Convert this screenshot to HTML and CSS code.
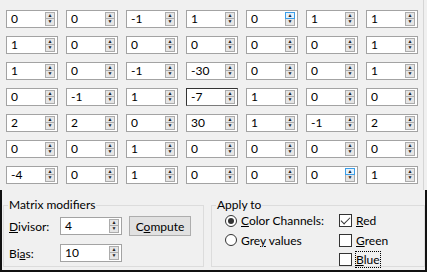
FILE: index.html
```html
<!DOCTYPE html>
<html lang="en">
<head>
    <meta charset="UTF-8">
    <title>User Defined Filter</title>
    <link rel="stylesheet" href="styles.css">
</head>
<body>
    <div class="dialog">
        <!-- 7x7 convolution matrix -->
        <div class="matrix">
            <div class="spin"><span class="val">0</span><span class="arrows"></span></div>
            <div class="spin"><span class="val">0</span><span class="arrows"></span></div>
            <div class="spin"><span class="val">-1</span><span class="arrows"></span></div>
            <div class="spin"><span class="val">1</span><span class="arrows"></span></div>
            <div class="spin"><span class="val">0</span><span class="arrows hot"></span></div>
            <div class="spin"><span class="val">1</span><span class="arrows"></span></div>
            <div class="spin"><span class="val">1</span><span class="arrows"></span></div>

            <div class="spin"><span class="val">1</span><span class="arrows"></span></div>
            <div class="spin"><span class="val">0</span><span class="arrows"></span></div>
            <div class="spin"><span class="val">0</span><span class="arrows"></span></div>
            <div class="spin"><span class="val">0</span><span class="arrows"></span></div>
            <div class="spin"><span class="val">0</span><span class="arrows"></span></div>
            <div class="spin"><span class="val">0</span><span class="arrows"></span></div>
            <div class="spin"><span class="val">1</span><span class="arrows"></span></div>

            <div class="spin"><span class="val">1</span><span class="arrows"></span></div>
            <div class="spin"><span class="val">0</span><span class="arrows"></span></div>
            <div class="spin"><span class="val">-1</span><span class="arrows"></span></div>
            <div class="spin"><span class="val">-30</span><span class="arrows"></span></div>
            <div class="spin"><span class="val">0</span><span class="arrows"></span></div>
            <div class="spin"><span class="val">0</span><span class="arrows"></span></div>
            <div class="spin"><span class="val">1</span><span class="arrows"></span></div>

            <div class="spin"><span class="val">0</span><span class="arrows"></span></div>
            <div class="spin"><span class="val">-1</span><span class="arrows"></span></div>
            <div class="spin"><span class="val">1</span><span class="arrows"></span></div>
            <div class="spin focus"><span class="val">-7</span><span class="arrows"></span></div>
            <div class="spin"><span class="val">1</span><span class="arrows"></span></div>
            <div class="spin"><span class="val">0</span><span class="arrows"></span></div>
            <div class="spin"><span class="val">0</span><span class="arrows"></span></div>

            <div class="spin"><span class="val">2</span><span class="arrows"></span></div>
            <div class="spin"><span class="val">2</span><span class="arrows"></span></div>
            <div class="spin"><span class="val">0</span><span class="arrows"></span></div>
            <div class="spin"><span class="val">30</span><span class="arrows"></span></div>
            <div class="spin"><span class="val">1</span><span class="arrows"></span></div>
            <div class="spin"><span class="val">-1</span><span class="arrows"></span></div>
            <div class="spin"><span class="val">2</span><span class="arrows"></span></div>

            <div class="spin"><span class="val">0</span><span class="arrows"></span></div>
            <div class="spin"><span class="val">0</span><span class="arrows"></span></div>
            <div class="spin"><span class="val">1</span><span class="arrows"></span></div>
            <div class="spin"><span class="val">0</span><span class="arrows"></span></div>
            <div class="spin"><span class="val">0</span><span class="arrows"></span></div>
            <div class="spin"><span class="val">0</span><span class="arrows"></span></div>
            <div class="spin"><span class="val">0</span><span class="arrows"></span></div>

            <div class="spin"><span class="val">-4</span><span class="arrows"></span></div>
            <div class="spin"><span class="val">0</span><span class="arrows"></span></div>
            <div class="spin"><span class="val">1</span><span class="arrows"></span></div>
            <div class="spin"><span class="val">0</span><span class="arrows"></span></div>
            <div class="spin"><span class="val">0</span><span class="arrows"></span></div>
            <div class="spin"><span class="val">0</span><span class="arrows hot"></span></div>
            <div class="spin"><span class="val">1</span><span class="arrows"></span></div>
        </div>

        <div class="bottom">
            <fieldset class="group modifiers">
                <legend>Matrix modifiers</legend>
                <div class="mod-row">
                    <span class="lbl"><u>D</u>ivisor:</span>
                    <div class="spin wide"><span class="val">4</span><span class="arrows"></span></div>
                    <button type="button" class="button">C<u>o</u>mpute</button>
                </div>
                <div class="mod-row">
                    <span class="lbl">Bi<u>a</u>s:</span>
                    <div class="spin wide"><span class="val">10</span><span class="arrows"></span></div>
                </div>
            </fieldset>

            <fieldset class="group apply">
                <legend>Apply to</legend>
                <div class="options">
                    <div class="opt"><span class="radio checked"></span><span><u>C</u>olor Channels:</span></div>
                    <div class="opt"><span class="check checked"></span><span><u>R</u>ed</span></div>
                    <div class="opt"><span class="radio"></span><span>Gre<u>y</u> values</span></div>
                    <div class="opt"><span class="check"></span><span><u>G</u>reen</span></div>
                    <div class="opt"></div>
                    <div class="opt"><span class="check"></span><span class="focus-rect"><u>B</u>lue</span></div>
                </div>
            </fieldset>
        </div>
    </div>
</body>
</html>
```

FILE: styles.css
```css
body {
    margin: 0;
    background: #f0f0f0;
    font-family: 'Segoe UI', 'Lato', sans-serif;
    font-size: 12px;
    color: #000;
}
.dialog {
    width: 427px;
    height: 272px;
    background: #f0f0f0;
}
.matrix {
    display: grid;
    grid-template-columns: repeat(7, 52px);
    grid-auto-rows: 18px;
    column-gap: 8px;
    row-gap: 8px;
    height: 190px;
    box-sizing: border-box;
    padding: 10px 0 0 6px;
    margin-right: 3px;
    border-right: 1px solid #d5d5d5;
}
.spin {
    display: flex;
    align-items: center;
    box-sizing: border-box;
    height: 18px;
    background: #fff;
    border: 1px solid #a3a3a3;
}
.spin.focus {
    border-color: #333 #7a7a7a #7a7a7a #333;
}
.spin.wide {
    width: 62px;
}
.val {
    flex: 1;
    padding-left: 4px;
    line-height: 16px;
}
.arrows {
    display: flex;
    flex-direction: column;
    width: 10px;
    height: 14px;
    margin-right: 2px;
}
.arrows::before, .arrows::after {
    display: block;
    height: 7px;
    box-sizing: border-box;
    border: 1px solid #acacac;
    background: #e5e5e5;
    color: #222;
    font-size: 5px;
    line-height: 5px;
    text-align: center;
}
.arrows::before {
    content: "\25B2";
}
.arrows::after {
    content: "\25BC";
    border-top: none;
}
.arrows.hot::before {
    border-color: #3c9ee8;
    background: #e5f1fb;
}

.bottom {
    display: flex;
    gap: 7px;
    height: 82px;
    box-sizing: border-box;
    padding: 7px 0 0 1px;
    border: 2px solid #111;
    border-top: none;
}
.group {
    margin: 0;
    height: 70px;
    box-sizing: border-box;
    border: 1px solid #dcdcdc;
    padding: 0 5px;
}
.group legend {
    padding: 0 1px;
    margin-left: -1px;
    line-height: 16px;
}
.modifiers {
    width: 204px;
}
.apply {
    width: 210px;
}
.mod-row {
    display: flex;
    align-items: center;
    height: 18px;
    margin-top: 4px;
}
.mod-row + .mod-row {
    margin-top: 9px;
}
.lbl {
    width: 51px;
}
.button {
    margin-left: 7px;
    width: 62px;
    height: 20px;
    padding: 0;
    font: inherit;
    color: #000;
    background: #e1e1e1;
    border: 1px solid #adadad;
}
.options {
    display: grid;
    grid-template-columns: 114px 80px;
    grid-auto-rows: 19.5px;
    margin-top: -2px;
    padding-left: 8px;
}
.opt {
    display: flex;
    align-items: center;
    gap: 4px;
}
.radio {
    width: 12px;
    height: 12px;
    box-sizing: border-box;
    border: 1px solid #333;
    border-radius: 50%;
    background: #fff;
    display: flex;
    align-items: center;
    justify-content: center;
}
.radio.checked::after {
    content: "";
    width: 6px;
    height: 6px;
    border-radius: 50%;
    background: #333;
}
.check {
    width: 13px;
    height: 13px;
    box-sizing: border-box;
    border: 1px solid #333;
    background: #fff;
    position: relative;
}
.check.checked::after {
    content: "";
    position: absolute;
    left: 3px;
    top: 0px;
    width: 4px;
    height: 8px;
    border: solid #333;
    border-width: 0 1px 1px 0;
    transform: rotate(45deg);
}
.focus-rect {
    outline: 1px dotted #000;
}
```
